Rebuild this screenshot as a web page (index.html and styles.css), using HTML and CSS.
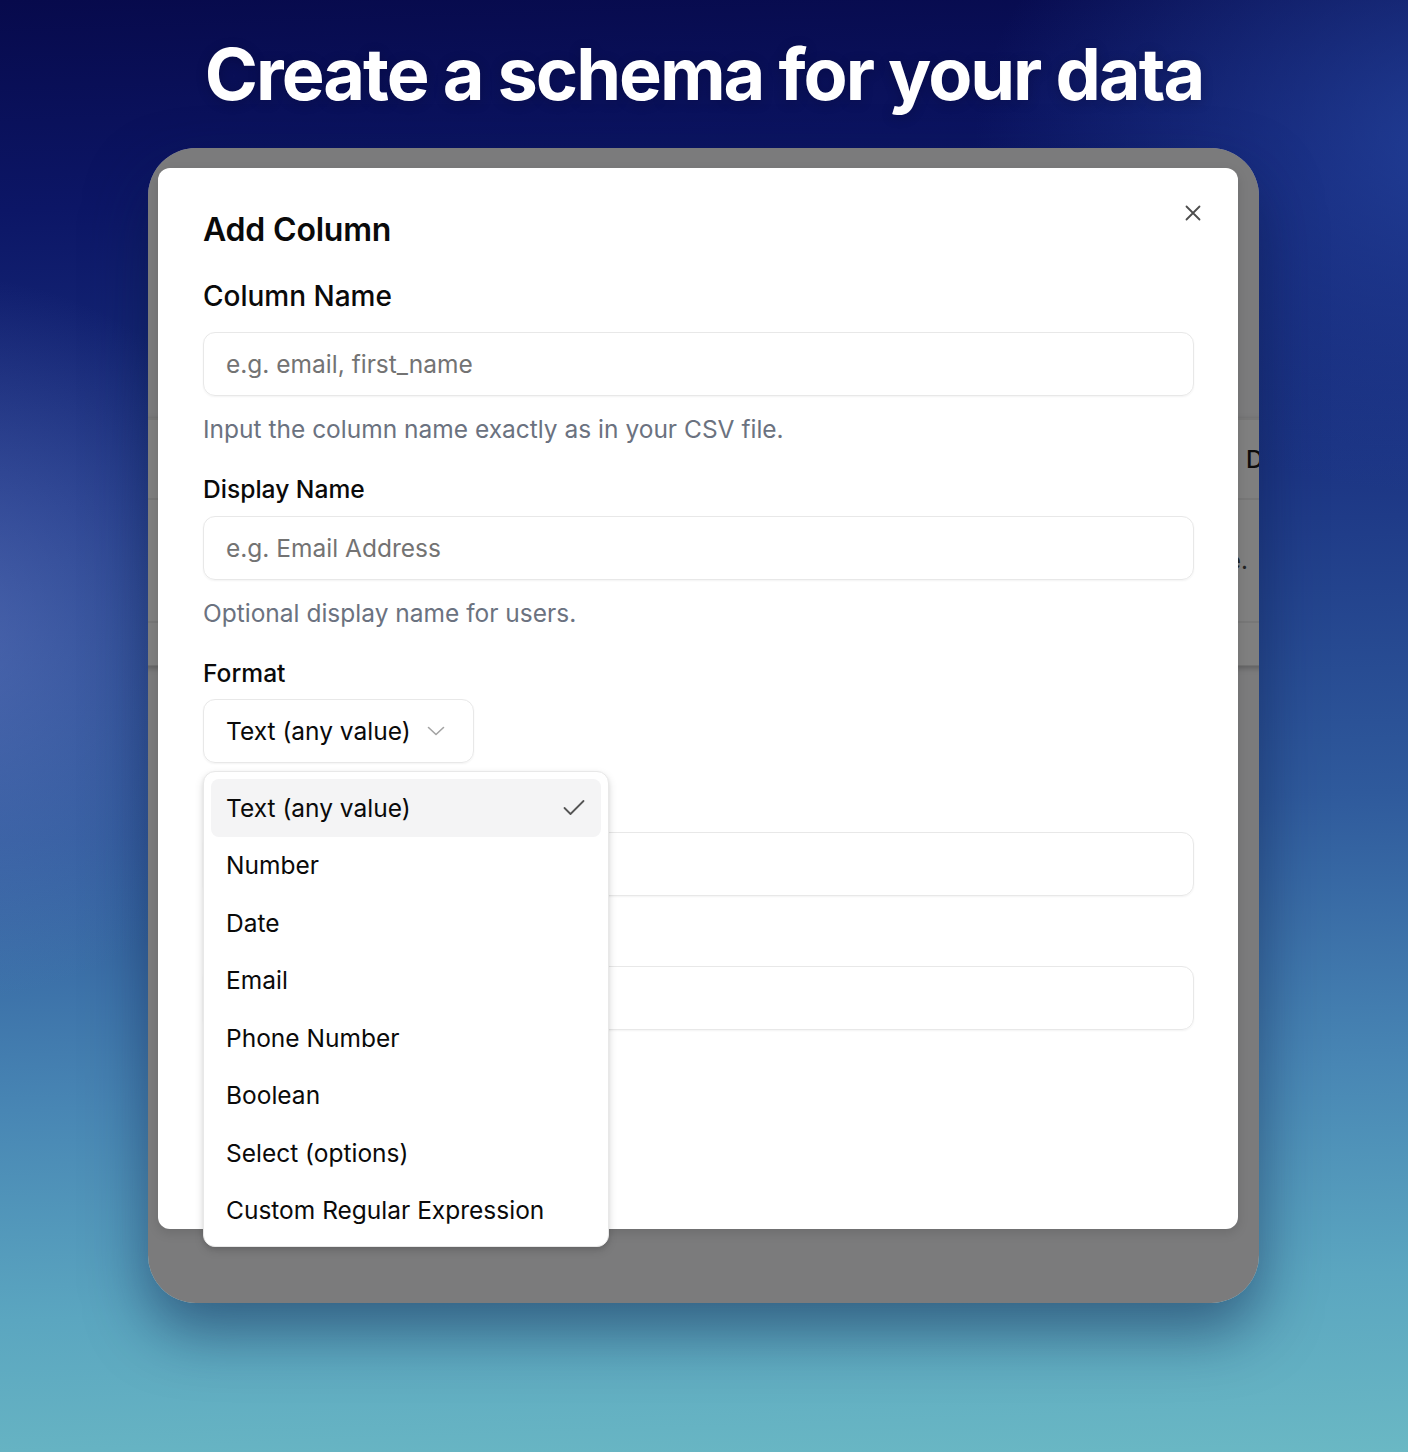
FILE: index.html
```html
<!DOCTYPE html>
<html lang="en">
<head>
<meta charset="utf-8">
<title>Create a schema for your data</title>
<link rel="stylesheet" href="styles.css">
</head>
<body>
<main class="hero">
  <h1 class="hero-title">Create a schema for your data</h1>
  <div class="device">
    <div class="app-bg">
      <div class="bg-card">
        <div class="bg-row bg-head"><span class="bg-cell-spacer"></span><span class="bg-head-text">D</span></div>
        <div class="bg-row bg-body"><span class="bg-body-text">Input the column name exactly as in your CSV file.</span></div>
        <div class="bg-row bg-last"></div>
      </div>
    </div>
    <div class="overlay"></div>
    <div class="dialog-wrap">
      <section class="dialog">
        <button class="close-btn" aria-label="Close">
          <svg width="16" height="16" viewBox="0 0 16 16"><path d="M1.5 1.5 L14.5 14.5 M14.5 1.5 L1.5 14.5" stroke="#4d4d4d" stroke-width="1.8" stroke-linecap="round" fill="none"/></svg>
        </button>
        <h2 class="dialog-title">Add Column</h2>

        <div class="label label-lg">Column Name</div>
        <div class="input input-first"><span class="placeholder">e.g. email, first_name</span></div>
        <p class="help">Input the column name exactly as in your CSV file.</p>

        <div class="label label-sm">Display Name</div>
        <div class="input"><span class="placeholder">e.g. Email Address</span></div>
        <p class="help">Optional display name for users.</p>

        <div class="label label-sm">Format</div>
        <div class="select-wrap">
          <div class="select">
            <span>Text (any value)</span>
            <svg class="chev" width="18" height="10" viewBox="0 0 18 10"><path d="M1.5 1.5 L9 8.5 L16.5 1.5" stroke="#a3a3a3" stroke-width="1.6" stroke-linecap="round" stroke-linejoin="round" fill="none"/></svg>
          </div>
          <ul class="menu">
            <li class="menu-item active"><span>Text (any value)</span>
              <svg width="22" height="17" viewBox="0 0 22 17"><path d="M1.5 9 L7.5 15 L20.5 2" stroke="#555555" stroke-width="1.8" stroke-linecap="round" stroke-linejoin="round" fill="none"/></svg>
            </li>
            <li class="menu-item">Number</li>
            <li class="menu-item">Date</li>
            <li class="menu-item">Email</li>
            <li class="menu-item">Phone Number</li>
            <li class="menu-item">Boolean</li>
            <li class="menu-item">Select (options)</li>
            <li class="menu-item">Custom Regular Expression</li>
          </ul>
        </div>

        <div class="label-space label-hidden1"></div>
        <div class="input"></div>
        <div class="label-space label-hidden2"></div>
        <div class="input"></div>
      </section>
    </div>
  </div>
</main>
</body>
</html>
```
FILE: styles.css
```css
html, body {
  margin: 0;
  padding: 0;
}
body {
  width: 1408px;
  height: 1452px;
  overflow: hidden;
  font-family: Inter, "Noto Sans", "Liberation Sans", sans-serif;
  background:
    radial-gradient(ellipse 520px 520px at -4% 44%, rgba(120, 140, 210, 0.45), rgba(120, 140, 210, 0) 70%),
    radial-gradient(ellipse 700px 500px at 104% 10%, rgba(40, 75, 165, 0.75), rgba(40, 75, 165, 0) 70%),
    linear-gradient(178deg, #070a4c 0%, #0c1666 14%, #1c3584 34%, #2f5a9c 56%, #4886b4 74%, #5ba6c0 88%, #6ab8c4 100%);
}

.hero {
  height: 1452px;
  box-sizing: border-box;
  padding-top: 36px;
  display: flex;
  flex-direction: column;
  align-items: center;
}

.hero-title {
  margin: 0;
  font-size: 72px;
  line-height: 76px;
  font-weight: 700;
  color: #ffffff;
  letter-spacing: -2px;
  text-shadow: 0 2px 12px rgba(0, 0, 30, 0.25);
}

.device {
  align-self: flex-start;
  margin-top: 36px;
  margin-left: 148px;
  width: 1111px;
  height: 1155px;
  border-radius: 48px;
  overflow: hidden;
  display: grid;
  grid-template-columns: minmax(0, 1fr);
  box-shadow: 0 28px 60px rgba(10, 25, 70, 0.5);
}
.device > * {
  grid-area: 1 / 1;
  min-width: 0;
}

.app-bg {
  background: #f6f6f8;
  padding-top: 270px;
  overflow: hidden;
}
.bg-card {
  background: #ffffff;
  margin-left: -20px;
  margin-right: -20px;
  border-bottom: 1px solid #e2e2e2;
  box-shadow: 0 2px 6px rgba(0, 0, 0, 0.25);
}
.bg-row {
  box-sizing: border-box;
  display: flex;
  align-items: center;
  border-top: 2px solid #eeeeee;
  font-size: 24px;
  color: #1a1a1a;
  overflow: hidden;
}
.bg-head { height: 80px; }
.bg-body { height: 123px; justify-content: flex-end; }
.bg-last { height: 44px; }
.bg-cell-spacer { width: 1118px; flex: none; }
.bg-head-text { font-weight: 500; white-space: nowrap; }
.bg-body-text {
  margin-right: 31px;
  color: #444444;
  white-space: nowrap;
}

.overlay {
  background: rgba(0, 0, 0, 0.5);
}

.dialog-wrap {
  padding: 20px 0 0 10px;
}

.dialog {
  position: relative;
  width: 1080px;
  height: 1061px;
  box-sizing: border-box;
  background: #ffffff;
  border-radius: 12px;
  padding: 42px 44px 0 45px;
  box-shadow: 0 4px 12px rgba(0, 0, 0, 0.12);
}

.close-btn {
  position: absolute;
  top: 37px;
  right: 37px;
  width: 16px;
  height: 16px;
  padding: 0;
  border: 0;
  background: none;
  display: flex;
}

.dialog-title {
  margin: 0;
  font-size: 32px;
  line-height: 40px;
  font-weight: 600;
  color: #0a0a0a;
  letter-spacing: -0.2px;
}

.label {
  font-weight: 500;
  color: #0a0a0a;
}
.label-lg {
  margin-top: 28px;
  font-size: 28px;
  line-height: 36px;
}
.label-sm {
  margin-top: 28px;
  font-size: 24.6px;
  line-height: 32px;
}
.label-space {
  height: 32px;
}
.label-hidden1 { margin-top: 26px; }
.label-hidden2 { margin-top: 27px; }

.input {
  margin-top: 11px;
  height: 64px;
  box-sizing: border-box;
  border: 1.5px solid #e8e8e8;
  border-radius: 12px;
  box-shadow: 0 1px 2px rgba(0, 0, 0, 0.05);
  display: flex;
  align-items: center;
  padding-left: 22px;
  font-size: 24.5px;
}
.input-first {
  margin-top: 18px;
}
.placeholder {
  color: #737373;
}

.help {
  margin: 17px 0 0;
  font-size: 24.5px;
  line-height: 32px;
  color: #6b7280;
}

.select-wrap {
  position: relative;
  margin-top: 10px;
  width: 271px;
}
.select {
  height: 64px;
  box-sizing: border-box;
  border: 1.5px solid #e8e8e8;
  border-radius: 12px;
  box-shadow: 0 1px 2px rgba(0, 0, 0, 0.05);
  display: flex;
  align-items: center;
  justify-content: space-between;
  padding: 0 28px 0 22px;
  font-size: 24.5px;
  color: #0a0a0a;
}
.chev {
  flex: none;
}

.menu {
  position: absolute;
  z-index: 5;
  top: calc(100% + 8px);
  left: 0;
  width: 406px;
  box-sizing: border-box;
  margin: 0;
  padding: 7px;
  list-style: none;
  background: #ffffff;
  border: 1.5px solid #e8e8e8;
  border-radius: 12px;
  box-shadow: 0 4px 10px rgba(0, 0, 0, 0.12), 0 2px 4px rgba(0, 0, 0, 0.08);
}
.menu-item {
  height: 57.5px;
  display: flex;
  align-items: center;
  justify-content: space-between;
  padding: 0 16px 0 15px;
  font-size: 24.5px;
  color: #0a0a0a;
  border-radius: 8px;
  white-space: nowrap;
}
.menu-item.active {
  background: #f4f4f5;
}
```
